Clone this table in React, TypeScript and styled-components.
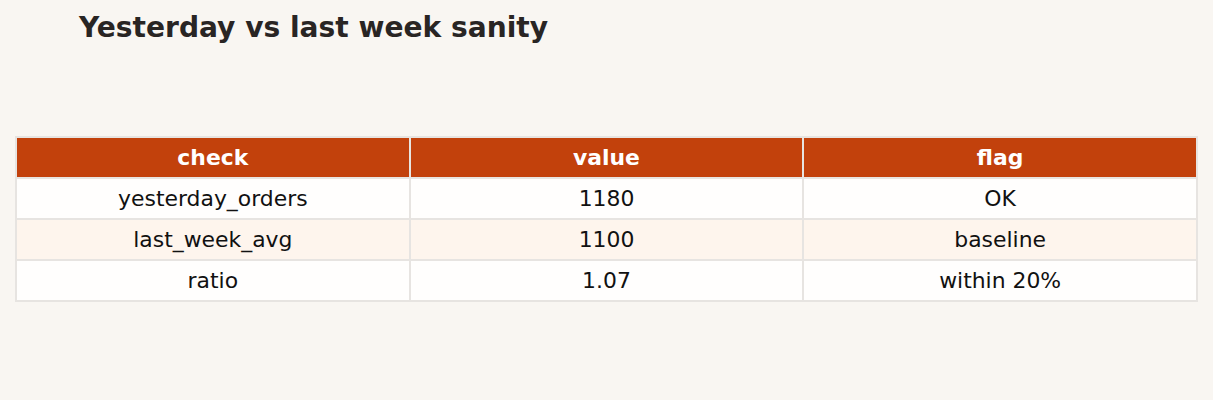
import React from "react";
import styled, { createGlobalStyle } from "styled-components";

const Global = createGlobalStyle`
  html, body {
    margin: 0;
    padding: 0;
    background: #f9f6f2;
  }
  body {
    font-family: "DejaVu Sans", "Liberation Sans", sans-serif;
  }
`;

const Page = styled.div`
  width: 1213px;
  height: 400px;
  box-sizing: border-box;
  padding: 11px 15px 0 15px;
  display: flex;
  flex-direction: column;
`;

const Title = styled.h1`
  margin: 0 0 0 64px;
  font-family: "DejaVu Sans", sans-serif;
  font-weight: bold;
  font-size: 28.1px;
  line-height: 34px;
  color: #292524;
`;

const Table = styled.table`
  margin-top: 91px;
  width: 1183px;
  border-collapse: collapse;
  table-layout: fixed;
  font-family: "DejaVu Sans", sans-serif;
  font-size: 21.9px;
`;

const Th = styled.th`
  height: 39px;
  padding: 0;
  background: #c2410c;
  color: #ffffff;
  font-weight: bold;
  text-align: center;
  border: 2px solid #e7e4e1;
`;

const Row = styled.tr<{ $alt?: boolean }>`
  background: ${(p) => (p.$alt ? "#fef5ed" : "#fffefd")};
`;

const Td = styled.td`
  height: 39px;
  padding: 0;
  color: #111111;
  text-align: center;
  border: 2px solid #e7e4e1;
`;

const rows = [
  ["yesterday_orders", "1180", "OK"],
  ["last_week_avg", "1100", "baseline"],
  ["ratio", "1.07", "within 20%"],
];

export default function App() {
  return (
    <>
      <Global />
      <Page>
        <Title>Yesterday vs last week sanity</Title>
        <Table>
          <thead>
            <tr>
              <Th>check</Th>
              <Th>value</Th>
              <Th>flag</Th>
            </tr>
          </thead>
          <tbody>
            {rows.map((r, i) => (
              <Row key={i} $alt={i === 1}>
                {r.map((c, j) => (
                  <Td key={j}>{c}</Td>
                ))}
              </Row>
            ))}
          </tbody>
        </Table>
      </Page>
    </>
  );
}
